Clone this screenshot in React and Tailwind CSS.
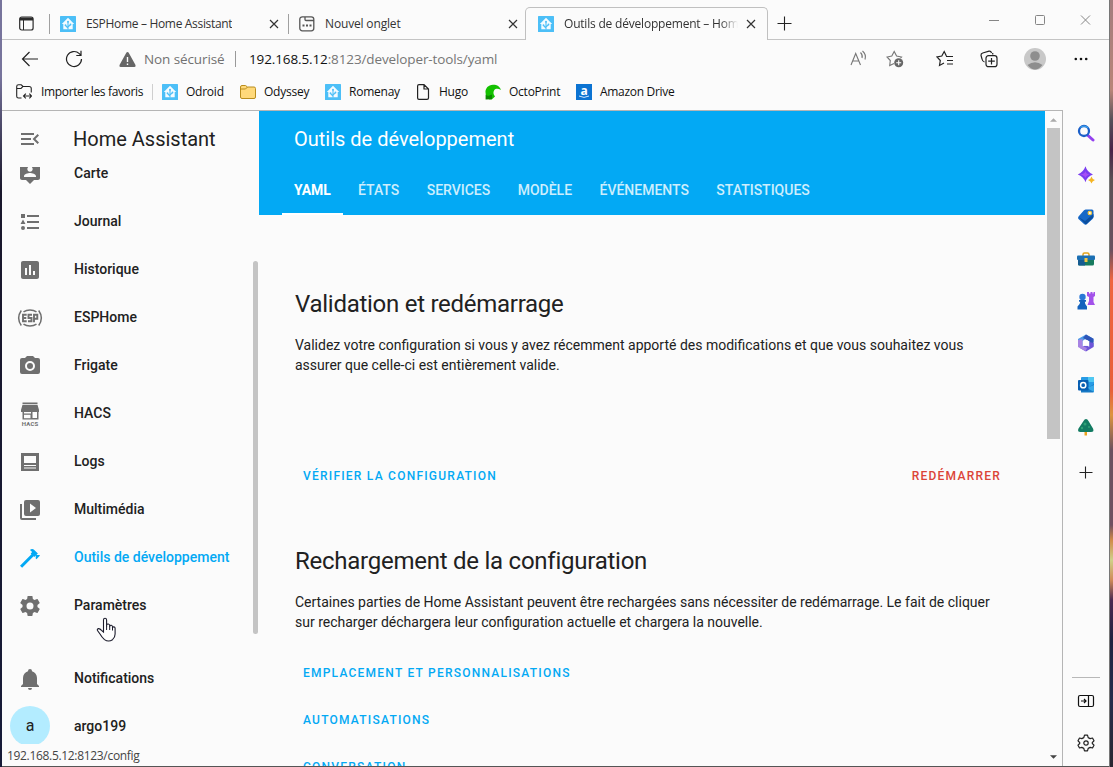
import React from "react";

const MENU = "M21,15.61L19.59,17L14.58,12L19.59,7L21,8.39L17.44,12L21,15.61M3,6H16V8H3V6M3,13V11H13V13H3M3,18V16H16V18H3Z";
const MAP = "M20 2H4C2.9 2 2 2.9 2 4V16C2 17.11 2.9 18 4 18H8L12 22L16 18H20C21.11 18 22 17.11 22 16V4C22 2.9 21.11 2 20 2M12 4.3C13.5 4.3 14.7 5.5 14.7 7S13.5 9.7 12 9.7 9.3 8.5 9.3 7 10.5 4.3 12 4.3M18 15H6V14.1C6 12.1 10 11 12 11S18 12.1 18 14.1V15Z";
const LIST = "M5,9.5L7.5,14H2.5L5,9.5M3,4H7V8H3V4M5,20A2,2 0 0,0 7,18A2,2 0 0,0 5,16A2,2 0 0,0 3,18A2,2 0 0,0 5,20M9,5V7H21V5H9M9,19H21V17H9V19M9,13H21V11H9V13Z";
const CHART = "M9 17H7V10H9M13 17H11V7H13M17 17H15V13H17M19 3H5C3.89 3 3 3.89 3 5V19C3 20.1 3.9 21 5 21H19C20.1 21 21 20.1 21 19V5C21 3.89 20.1 3 19 3Z";
const CAMERA = "M4,4H7L9,2H15L17,4H20A2,2 0 0,1 22,6V18A2,2 0 0,1 20,20H4A2,2 0 0,1 2,18V6A2,2 0 0,1 4,4M12,7A5,5 0 0,0 7,12A5,5 0 0,0 12,17A5,5 0 0,0 17,12A5,5 0 0,0 12,7M12,9A3,3 0 0,1 15,12A3,3 0 0,1 12,15A3,3 0 0,1 9,12A3,3 0 0,1 12,9Z";
const LOGS = "M3 3H21V21H3V3M6 6V13H18V6H6M6 15V16H18V15H6M6 17.500V18.500H18V17.500H6Z";
const MEDIA = "M4,6H2V20A2,2 0 0,0 4,22H18V20H4V6M20,2H8A2,2 0 0,0 6,4V16A2,2 0 0,0 8,18H20A2,2 0 0,0 22,16V4A2,2 0 0,0 20,2M12,14.5V5.5L18,10L12,14.5Z";
const HAMMER = "M2 19.63L13.43 8.2L12.72 7.5L14.14 6.07L12 3.89C13.2 2.7 15.09 2.7 16.27 3.89L19.87 7.5L18.45 8.91H21.29L22 9.62L18.45 13.21L17.74 12.5V9.62L16.27 11.04L15.56 10.33L4.13 21.76L2 19.63Z";
const COG = "M12,15.5A3.5,3.5 0 0,1 8.5,12A3.5,3.5 0 0,1 12,8.5A3.5,3.5 0 0,1 15.5,12A3.5,3.5 0 0,1 12,15.5M19.43,12.97C19.47,12.65 19.5,12.33 19.5,12C19.5,11.67 19.47,11.34 19.43,11L21.54,9.37C21.73,9.22 21.78,8.95 21.66,8.73L19.66,5.27C19.54,5.05 19.27,4.96 19.05,5.05L16.56,6.05C16.04,5.66 15.5,5.32 14.87,5.07L14.5,2.42C14.46,2.18 14.25,2 14,2H10C9.75,2 9.54,2.18 9.5,2.42L9.13,5.07C8.5,5.32 7.96,5.66 7.44,6.05L4.95,5.05C4.73,4.96 4.46,5.05 4.34,5.27L2.34,8.73C2.21,8.95 2.27,9.22 2.46,9.37L4.57,11C4.53,11.34 4.5,11.67 4.5,12C4.5,12.33 4.53,12.65 4.57,12.97L2.46,14.63C2.27,14.78 2.21,15.05 2.34,15.27L4.34,18.73C4.46,18.95 4.73,19.03 4.95,18.95L7.44,17.94C7.96,18.34 8.5,18.68 9.13,18.93L9.5,21.58C9.54,21.82 9.75,22 10,22H14C14.25,22 14.46,21.82 14.5,21.58L14.87,18.93C15.5,18.67 16.04,18.34 16.56,17.94L19.05,18.95C19.27,19.03 19.54,18.95 19.66,18.73L21.66,15.27C21.78,15.05 21.73,14.78 21.54,14.63L19.43,12.97Z";
const BELL = "M21,19V20H3V19L5,17V11C5,7.9 7.03,5.17 10,4.29C10,4.19 10,4.1 10,4A2,2 0 0,1 12,2A2,2 0 0,1 14,4C14,4.1 14,4.19 14,4.29C16.97,5.17 19,7.9 19,11V17L21,19M14,21A2,2 0 0,1 12,23A2,2 0 0,1 10,21";

const Mdi = ({ d }) => (
  <svg className="size-6 shrink-0 fill-current" viewBox="0 0 24 24"><path fillRule="evenodd" d={d} /></svg>
);

const EspIcon = () => (
  <svg className="size-6 shrink-0 overflow-visible" viewBox="0 0 24 24" fill="none" stroke="currentColor">
    <path strokeWidth="1.500" d="M5.500 5.800A10 8 0 0 1 18.500 5.800M5.500 18.200A10 8 0 0 0 18.500 18.200M3.300 4.500Q-2 12 3.300 19.500M20.700 4.500Q26 12 20.700 19.500" />
    <path strokeWidth="1.900" d="M8.700 8.800H5V15.200H8.700M5 12H8.300M14 8.800H10.500V12H13.500V15.200H10M16 16.200V8.800H19.300V12.700H16" />
  </svg>
);

const HacsIcon = () => (
  <svg className="size-6 shrink-0 overflow-visible fill-current" viewBox="0 0 24 24">
    <path d="M4.500 .5H19.500V2H4.500zM4.500 2.700H19.500L21 8V10H3V8z" />
    <path fillRule="evenodd" d="M4.500 10H6V11.500H13V10H14.500V16H19V10H20.500V17.500H4.500zM6 12.700V16.200H12.500V12.700z" />
    <text x="12" y="23.700" textAnchor="middle" textLength="16.500" className="font-['Roboto',sans-serif] text-[6px] font-bold">HACS</text>
  </svg>
);

const HaIcon = () => (
  <svg className="size-4 shrink-0" viewBox="0 0 16 16">
    <rect width="16" height="16" rx="0.500" fill="#4cbff7" />
    <path d="M8 1.800L14.200 8H12.700V13.300H3.300V8H1.800z" fill="#f4fbff" />
    <path d="M8 13.500V6M8 12L5.500 9.500M8 11L10.500 8.700" stroke="#4cbff7" strokeWidth="1.100" />
    <circle cx="8" cy="5.700" r="1" fill="#4cbff7" /><circle cx="5.500" cy="9.200" r=".9" fill="#4cbff7" /><circle cx="10.500" cy="8.500" r=".9" fill="#4cbff7" />
  </svg>
);

const Close = () => (
  <svg className="size-[10px] shrink-0" viewBox="0 0 10 10"><path d="M1 1L9 9M9 1L1 9" stroke="#333" strokeWidth="1.200" /></svg>
);

const FolderIcon = () => (
  <svg className="size-4 shrink-0" viewBox="0 0 16 16"><path d="M.5 3Q.5 1.500 2 1.500H5.500L7.500 3H14Q15.500 3 15.500 4.500V13Q15.500 14.500 14 14.500H2Q.5 14.500 .5 13z" fill="#ffd97a" stroke="#b98d1d" /><path d="M.5 5H5.500L7.500 3" stroke="#b98d1d" fill="none" /></svg>
);
const PageIcon = () => (
  <svg className="size-4 shrink-0" viewBox="0 0 16 16" fill="none" stroke="#222" strokeWidth="1.200"><path d="M4 .6H9L13.500 5V14Q13.500 15.400 12 15.400H4Q2.600 15.400 2.600 14V2Q2.600 .6 4 .6zM9 .6V5H13.500" /></svg>
);
const OctoIcon = () => (
  <svg className="size-4 shrink-0" viewBox="0 0 16 16"><path d="M4.500 15.500C-2 11 -.5 1 8 .7C12 .6 15 2.500 15.900 6C13.500 4.200 10.500 4.200 9.300 6C7.800 8.500 8.500 10.500 10 12.500L7 15.200z" fill="#13c100" /><path d="M.6 15.500V10.500L3 12L7 10.500V15.200z" fill="#0a8a00" /></svg>
);
const AmazonIcon = () => (
  <svg className="size-4 shrink-0 overflow-visible" viewBox="0 0 16 16"><rect width="16" height="16" fill="#0b73d2" /><text x="8" y="10.800" textAnchor="middle" fill="#fff" className="font-['Open_Sans',sans-serif] text-[12px] font-bold">a</text><path d="M3 12Q8 14.800 13 12" stroke="#cfe6ff" fill="none" /></svg>
);

const Tab = ({ icon, title, className, textClass }) => (
  <div className={"flex items-center " + className}>
    {icon}
    <span className={"min-w-0 overflow-hidden text-[12px] whitespace-nowrap text-[#333] " + textClass}>{title}</span>
    <span className="ml-auto flex"><Close /></span>
  </div>
);

const TabStrip = () => (
  <div className="flex h-10 shrink-0">
    <div className="flex h-10 w-[525px] shrink-0 items-center border-b border-[#c4c4c4] pt-2">
      <svg className="ml-[17px] size-[15px]" viewBox="0 0 15 15" fill="none" stroke="#2b2b2b"><rect x=".7" y="1" width="13.400" height="13" rx="2" strokeWidth="1.200" /><path d="M1 3H14" strokeWidth="3" /><path d="M4.500 4V14" /></svg>
      <div className="ml-[15px] h-5 w-px bg-[#a0a0a0]" />
      <Tab className="ml-[10px] w-[219px]" icon={<HaIcon />} title="ESPHome – Home Assistant" textClass="ml-[10px] tracking-[-0.32px]" />
      <div className="ml-[9px] h-5 w-px bg-[#a0a0a0]" />
      <Tab className="ml-[10px] w-[219px]" title="Nouvel onglet" textClass="ml-[10px] tracking-[-0.16px]" icon={
        <svg className="size-4 shrink-0" viewBox="0 0 16 16" fill="none" stroke="#555" strokeWidth="1.300"><rect x=".8" y=".8" width="14" height="14" rx="2.500" /><path d="M6 1V3.500Q6 4.500 7 4.500H15" /><path d="M3.500 9.500H5.500M7 9.500H9M10.500 9.500H12.500" strokeWidth="2" /></svg>
      } />
    </div>
    <div className="-ml-[2px] mt-[7px] flex h-[33px] w-[243px] shrink-0 items-center rounded-t-[5px] border border-b-0 border-[#c0c0c0] bg-[#fbfbfb] pl-3">
      <div className="flex items-center">
        <HaIcon />
        <span className="ml-[10px] w-[174px] overflow-hidden mask-r-from-90% text-[12px] tracking-[-0.2px] whitespace-nowrap text-[#333]">Outils de développement – Home Assistant</span>
        <span className="ml-[8px] flex"><Close /></span>
      </div>
    </div>
    <div className="flex h-10 min-w-0 flex-1 items-center border-b border-[#c4c4c4] pt-[7px]">
      <svg className="ml-[9px] size-[15px]" viewBox="0 0 15 15" stroke="#222" strokeWidth="1.100"><path d="M.5 7.500H14.500M7.500 .5V14.500" /></svg>
      <svg className="mb-2 ml-auto h-3 w-[102px]" viewBox="0 0 102 12" fill="none" stroke="#858585"><path d="M0 7.500H10M92 2.500L101 11.500M101 2.500L92 11.500" /><rect x="46.500" y="2.500" width="9" height="9" rx="1" /></svg>
      <div className="w-[18px]" />
    </div>
  </div>
);

const AddressBar = () => (
  <div className="flex h-[38px] shrink-0 items-center text-[13.500px]">
    <svg className="ml-[19px] size-[18px]" viewBox="0 0 18 18" fill="none" stroke="#222" strokeWidth="1.200"><path d="M17 9H1.500M8.500 2L1.500 9L8.500 16" /></svg>
    <svg className="ml-[26px] size-[18px]" viewBox="0 0 18 18" fill="none" stroke="#222" strokeWidth="1.200"><path d="M16.500 9A7.500 7.500 0 1 1 14.300 3.700L16 5.400M16 .8V5.500H11.300" /></svg>
    <svg className="ml-[36px] h-[15px] w-[17px]" viewBox="0 0 17 15"><path d="M8.500 0Q9.300 0 9.700 .8L16.500 13Q17 15 15.500 15H1.500Q0 15 .5 13L7.300 .8Q7.700 0 8.500 0z" fill="#666" /><path d="M8.500 5V10M8.500 11.500V13" stroke="#fff" strokeWidth="1.400" /></svg>
    <span className="ml-[8px] w-[80px] tracking-[-0.1px] whitespace-nowrap text-[#717171]">Non sécurisé</span>
    <div className="ml-[11px] h-4 w-px bg-[#999]" />
    <span className="ml-[13px] tracking-[-0.12px] whitespace-nowrap text-[#767676]"><span className="text-[#111]">192.168.5.12</span>:8123/developer-tools/yaml</span>
    <svg className="ml-auto size-[18px]" viewBox="0 0 18 18" fill="none" stroke="#767676" strokeWidth="1.100"><path d="M1 15L5.700 3.500L10.500 15M2.600 11H9" /><path d="M10.500 2.500Q13 5 12 8M12.500 1Q16.500 4.500 15 9.500" /></svg>
    <svg className="ml-[18px] size-[18px]" viewBox="0 0 18 18" fill="none" stroke="#767676" strokeWidth="1.100"><path d="M8 13.500L3.700 15.500L4.300 10.500L1 7L5.800 6L8.200 1.500L10.600 6L15.500 7L14.500 8" /><circle cx="12.700" cy="12.700" r="4.500" fill="#666" stroke="none" /><path d="M12.700 10.200V15.200M10.200 12.700H15.200" stroke="#fff" /></svg>
    <svg className="ml-[32px] size-[18px]" viewBox="0 0 18 18" fill="none" stroke="#222" strokeWidth="1.200"><path d="M8 13L3.500 15.500L4.300 10.500L1 7L5.800 6L8.200 1.500L10.400 6M10 6.500H17M11 10.500H17M11 14H17" /></svg>
    <svg className="ml-[26px] size-[18px]" viewBox="0 0 18 18" fill="none" stroke="#222" strokeWidth="1.200"><path d="M4.500 12Q2.500 11.500 2 9L1 5.500Q.8 3.500 2.700 3L9 1.200Q11 1 11.500 3M13 4.500L12.500 3" /><rect x="6" y="5.700" width="11" height="11" rx="2.500" /><path d="M11.500 8V14.500M8.200 11.200H14.800" /></svg>
    <svg className="ml-[26px] size-[22px]" viewBox="0 0 22 22"><circle cx="11" cy="11" r="11" fill="#c8c8c8" /><circle cx="11" cy="8" r="4.800" fill="#8e8e8e" /><path d="M3.500 17Q11 11.500 18.500 17Q11 26 3.500 17z" fill="#8e8e8e" /></svg>
    <svg className="mr-[21px] ml-[28px] h-1 w-[14px]" viewBox="0 0 14 4" fill="#111"><circle cx="1.800" cy="2" r="1.300" /><circle cx="7" cy="2" r="1.300" /><circle cx="12.200" cy="2" r="1.300" /></svg>
  </div>
);

const Fav = ({ icon, label, className, textClass = "ml-2 tracking-[-0.24px]" }) => (
  <div className={"flex shrink-0 items-center text-[12px] whitespace-nowrap text-[#111] " + className}>
    {icon}<span className={textClass}>{label}</span>
  </div>
);

const FavoritesBar = () => (
  <div className="flex h-8 shrink-0 items-center pb-[5px]">
    <Fav className="ml-[14px] w-[127px]" label="Importer les favoris" textClass="ml-[9px] tracking-[-0.36px]" icon={
      <svg className="size-[17px]" viewBox="0 0 16 16" fill="none" stroke="#222" strokeWidth="1.100"><path d="M5.500 14.500H2.500Q.7 14.500 .7 12.700V3Q.7 1.300 2.500 1.300H5.200L7 3H13Q15.200 3 15.200 5V9M.7 5H5L7 3M8 12.500H15.500M9.800 10.200L7.500 12.500L9.800 14.800M13.300 10.200L15.500 12.500L13.300 14.800" /></svg>
    } />
    <div className="ml-[9px] h-4 w-px bg-[#cfcfcf]" />
    <Fav className="ml-[9px] w-[78px]" icon={<HaIcon />} label="Odroid" />
    <Fav className="w-[85px]" icon={<FolderIcon />} label="Odyssey" />
    <Fav className="w-[90px]" icon={<HaIcon />} label="Romenay" />
    <Fav className="w-[70px]" icon={<PageIcon />} label="Hugo" />
    <Fav className="w-[91px]" icon={<OctoIcon />} label="OctoPrint" />
    <Fav icon={<AmazonIcon />} label="Amazon Drive" textClass="ml-2 tracking-[-0.3px]" />
  </div>
);

const NavItem = ({ icon, label, active }) => (
  <div className={"flex h-12 shrink-0 items-center pl-4 text-[14px] font-medium " + (active ? "text-[#03a9f4]" : "text-[#212121]")}>
    <span className={"flex pt-0.5 " + (active ? "" : "text-[#6f6f6f]")}>{icon}</span>
    <span className="ml-8 leading-[12px] whitespace-nowrap">{label}</span>
  </div>
);

const Sidebar = () => (
  <aside className="relative flex w-[257px] shrink-0 flex-col">
    <div className="flex h-14 shrink-0 items-center pl-4 text-[20px] text-[#212121]">
      <span className="flex text-[#6f6f6f]"><Mdi d={MENU} /></span>
      <span className="ml-[31px] whitespace-nowrap">Home Assistant</span>
    </div>
    <div className="flex h-[467px] shrink-0 overflow-hidden">
      <div className="-mt-[18px] flex flex-1 flex-col">
        <NavItem icon={<Mdi d={MAP} />} label="Carte" />
        <NavItem icon={<Mdi d={LIST} />} label="Journal" />
        <NavItem icon={<Mdi d={CHART} />} label="Historique" />
        <NavItem icon={<EspIcon />} label="ESPHome" />
        <NavItem icon={<Mdi d={CAMERA} />} label="Frigate" />
        <NavItem icon={<HacsIcon />} label="HACS" />
        <NavItem icon={<Mdi d={LOGS} />} label="Logs" />
        <NavItem icon={<Mdi d={MEDIA} />} label="Multimédia" />
        <NavItem icon={<Mdi d={HAMMER} />} label="Outils de développement" active />
        <NavItem icon={<Mdi d={COG} />} label="Paramètres" />
      </div>
      <div className="mt-[94px] mr-[1px] h-[373px] w-[5px] rounded-full bg-[#c4c4c4]" />
    </div>
    <div className="mt-5">
      <NavItem icon={<Mdi d={BELL} />} label="Notifications" />
      <div className="flex h-12 items-center pl-2 text-[14px] font-medium text-[#212121]">
        <span className="flex size-10 items-center justify-center rounded-full bg-[#b3ecff] text-[16px] font-normal">a</span>
        <span className="ml-6">argo199</span>
      </div>
    </div>
    <div className="absolute bottom-0 left-0 h-[22px] w-[150px] bg-[#fbfbfb] pl-[5px] font-['Open_Sans','Noto_Sans',sans-serif] text-[12px] leading-[24px] tracking-[-0.32px] text-[#444]">192.168.5.12:8123/config</div>
    <svg className="absolute top-[506px] left-[93px] h-[26px] w-[22px]" viewBox="0 0 22 26"><path d="M8.500 15V3Q8.500 1.300 10 1.300T11.600 3V9.500V8Q12 6.800 13.300 7T14.700 8.500V10V9Q15.200 8 16.300 8.300T17.500 9.700V11Q17.800 9.600 19 9.900T20.100 11.500V17Q20.100 20.500 17.500 22.700Q13.500 25.400 9.500 22.600Q7 20.500 5 17L2.500 13.500Q2 12 3.300 11.600Q5 11.400 6.500 13.300z" fill="#fff" stroke="#1b1b2b" strokeWidth="1.100" /><path d="M11.600 9V13M14.700 9.500V13M17.500 10.500V13.500" stroke="#1b1b2b" /></svg>
  </aside>
);

const TABS = ["ÉTATS", "SERVICES", "MODÈLE", "ÉVÉNEMENTS", "STATISTIQUES"];

const Main = () => (
  <main className="flex w-[786px] shrink-0 flex-col overflow-hidden text-[#212121]">
    <header className="flex h-[104px] shrink-0 flex-col bg-[#03a9f4] text-white">
      <div className="flex h-14 items-center pl-[35px] text-[20px]">Outils de développement</div>
      <div className="flex h-12 gap-[3.400px] pl-[23px] text-[14px] font-medium">
        <div className="flex items-center border-b-2 border-white px-3 font-bold tracking-[-0.1px]">YAML</div>
        {TABS.map((t) => <div key={t} className="flex items-center border-b-2 border-transparent px-3 text-[#cdeefd]">{t}</div>)}
      </div>
    </header>
    <section className="mt-[73px] px-9">
      <h1 className="text-[24px] leading-8 tracking-[-0.27px]">Validation et redémarrage</h1>
      <p className="mt-[15px] h-10 text-[14px] leading-5">Validez votre configuration si vous y avez récemment apporté des modifications et que vous souhaitez vous<br />assurer que celle-ci est entièrement valide.</p>
      <div className="mt-[92px] flex h-[18px] items-center justify-between pr-[8px] pl-2 text-[12px] font-medium tracking-[1.230px]">
        <span className="text-[#03a9f4]">VÉRIFIER LA CONFIGURATION</span>
        <span className="text-[#db4437]">REDÉMARRER</span>
      </div>
    </section>
    <section className="mt-[60px] px-9">
      <h1 className="text-[24px] leading-8 tracking-[-0.25px]">Rechargement de la configuration</h1>
      <p className="mt-[15px] h-10 text-[14px] leading-5 whitespace-nowrap">Certaines parties de Home Assistant peuvent être rechargées sans nécessiter de redémarrage. Le fait de cliquer<br />sur recharger déchargera leur configuration actuelle et chargera la nouvelle.</p>
      <div className="mt-[17px] flex flex-col pl-2 text-[12px] font-medium tracking-[1.230px] text-[#03a9f4]">
        <span className="flex h-[47px] items-center">EMPLACEMENT ET PERSONNALISATIONS</span>
        <span className="flex h-[47px] items-center">AUTOMATISATIONS</span>
        <span className="flex h-[47px] items-center">CONVERSATION</span>
      </div>
    </section>
  </main>
);

const Scrollbar = () => (
  <div className="flex w-[18px] shrink-0 flex-col items-center justify-between border-r border-[#b5b5b5]">
    <div className="flex flex-col items-center">
      <svg className="mt-[7px] h-1 w-[7px]" viewBox="0 0 8 4"><path d="M0 4L4 0L8 4z" fill="#aaa" /></svg>
      <div className="mt-[6px] h-[311px] w-[13px] bg-[#c4c4c4]" />
    </div>
    <svg className="mb-[7px] h-1 w-[7px]" viewBox="0 0 8 4"><path d="M0 0L4 4L8 0z" fill="#444" /></svg>
  </div>
);

const Icon = ({ children }) => (
  <div className="flex h-[42px] w-full shrink-0 items-center justify-center"><svg className="size-[18px]" viewBox="0 0 18 18" fill="none">{children}</svg></div>
);

const EdgeRail = () => (
  <nav className="flex w-[46px] shrink-0 flex-col items-center">
    <div className="h-[2px] shrink-0" />
    <Icon><path d="M11 11.500L16 16" stroke="#9340ef" strokeWidth="3" strokeLinecap="round" /><circle cx="7" cy="7" r="5" stroke="#1a5fc9" strokeWidth="2.300" /><path d="M3.500 3.500A5 5 0 0 1 11 4" stroke="#3aa0ea" strokeWidth="1.300" /></Icon>
    <Icon><path d="M8.500 .3Q10 6 16 8.500Q10 10.500 8.500 16.300Q6.500 10.500 .8 8.500Q6.500 6 8.500 .3z" fill="#7a3df0" /><path d="M8.500 5Q9 8 12.500 8.500Q9 9.500 8.500 12Q8 9.500 3 8.500Q8 8 8.500 5z" fill="#a54ff5" /><path d="M14.500 10.500Q15 13 18 14Q15 15 14.500 17.500Q14 15 11 14Q14 13 14.500 10.500z" fill="#f5b523" /></Icon>
    <Icon><path d="M8.500 1.500H15Q16.500 1.500 16.500 3V9Q16.500 10 15.500 11L10 16Q8.500 17.500 7 16L1.500 11Q.5 10 1.500 8.500L7 2.300z" fill="#1769c8" /><path d="M1.500 9L9 16.500L16.500 9V6L8 13z" fill="#0b4f9e" /><circle cx="12.800" cy="5" r="1.700" fill="#fff" stroke="#f2c43a" strokeWidth="1.200" /></Icon>
    <Icon><path d="M6 6V4.500Q6 3 7.500 3H10.500Q12 3 12 4.500V6" stroke="#e0a21d" strokeWidth="1.500" /><rect x="0" y="5.500" width="18" height="4.500" rx="1" fill="#1b6fb3" /><path d="M1 10H17V14Q17 15.500 15.500 15.500H2.500Q1 15.500 1 14z" fill="#177b5e" /><path d="M1 10H8V15.500H2.500Q1 15.500 1 14z" fill="#155b91" /><rect x="7.500" y="8" width="3" height="4" fill="#f3c544" /></Icon>
    <Icon><path d="M10 0H12V1.500H13.500V0H15.500V1.500H16.500V0H18V4L16.500 5V10L18 13H10.500L12 9V5L10 4z" fill="#a352ea" /><circle cx="5.500" cy="5" r="3.200" fill="#2a78d6" /><path d="M2 8H9V9.700H7.800Q7.800 12.500 10 14.500V17.500H.5V14.500Q3.200 12.500 3.200 9.700H2z" fill="#1462bd" /></Icon>
    <Icon><path d="M9 .5L16.500 4.700V8L9 4.500L5.500 7V12L1 10.500V5z" fill="#4b9be8" /><path d="M9 .5L16.500 4.700V12.500L12.500 14V7.500L6 4z" fill="#2e55b8" /><path d="M16.500 9V13L9 17.500L3 14L9 11L12.500 13V8z" fill="#6e55d9" /><path d="M5.500 5V12L10 14L8.500 17.200L1 13V6z" fill="#a783e3" /><circle cx="9" cy="9" r="3" fill="#fff" /></Icon>
    <Icon><rect x="4" y="1" width="13" height="10" rx="1" fill="#279be5" /><path d="M11 1H17V6H11z" fill="#50c8f2" /><path d="M4 9L11 12L17 8V15.500Q17 16.500 16 16.500H4z" fill="#167ac6" /><path d="M10 12L17 16V9z" fill="#36a9e8" /><rect x="1" y="4" width="10.500" height="10.500" rx="1" fill="#075eb2" /><circle cx="6.200" cy="9.200" r="2.600" stroke="#fff" strokeWidth="1.500" /></Icon>
    <Icon><path d="M7.500 13H10V17.500H7.500z" fill="#eaa31d" /><path d="M9 1Q10.500 1 11.500 3L16 10.500Q17.500 14 14 14H3.500Q0 14 1.500 10.500L6.500 3Q7.500 1 9 1z" fill="#127b62" /><circle cx="8" cy="6" r="1.500" fill="#2fa277" /><circle cx="12" cy="9" r="1" fill="#2fa277" /><circle cx="5" cy="10" r="1.200" fill="#2fa277" /></Icon>
    <div className="mt-[3px] w-full"><Icon><path d="M2.500 9.500H15.500M8.500 3.500V15.500" stroke="#222" strokeWidth="1.100" /></Icon></div>
    <div className="mt-auto h-px w-7 bg-[#b8b8b8]" />
    <div className="mt-[2px] mb-[2px] w-full">
      <Icon><rect x="1.500" y="3.500" width="15" height="11" rx="1.500" stroke="#111" strokeWidth="1.200" /><path d="M11.500 3.500V14.500M4 9H9M7 7L9 9L7 11" stroke="#111" strokeWidth="1.200" /></Icon>
      <Icon><path d="M7.500 1.200H10.500L11.200 3.600L13.200 4.600L15.500 4L17 6.800L15.300 8.500V9.500L17 11.200L15.500 14L13.200 13.400L11.200 14.400L10.500 16.800H7.500L6.800 14.400L4.800 13.400L2.500 14L1 11.200L2.700 9.500V8.500L1 6.800L2.500 4L4.800 4.600L6.800 3.600z" stroke="#222" strokeWidth="1.200" strokeLinejoin="round" /><circle cx="9" cy="9" r="2.200" stroke="#222" strokeWidth="1.200" /></Icon>
    </div>
  </nav>
);

export default function App() {
  return (
    <div className="flex h-[767px] w-[1113px] overflow-hidden bg-[#1c1a2c] font-['Roboto',sans-serif]">
      <div className="w-[2px] shrink-0 bg-linear-to-b from-[#77749c] from-10% via-[#19172b] via-25% to-[#171b38]" />
      <div className="flex w-[1107px] shrink-0 flex-col border-b border-[#555] bg-[#fbfbfb]">
        <div className="flex h-[110px] shrink-0 flex-col font-['Open_Sans','Noto_Sans',sans-serif]">
          <TabStrip />
          <AddressBar />
          <FavoritesBar />
        </div>
        <div className="flex min-h-0 flex-1">
          <div className="flex w-[1061px] shrink-0 border-t border-[#b5b5b5]">
            <Sidebar />
            <Main />
            <Scrollbar />
          </div>
          <EdgeRail />
        </div>
      </div>
      <div className="w-1 shrink-0 border-l border-[#777] bg-[linear-gradient(to_bottom,#a47c7d_0,#b98578_90px,#55505a_120px,#4a2248_150px,#5b5055_180px,#6b5060_250px,#ef6540_280px,#e85f3a_390px,#dd9440_415px,#6b5060_450px,#705060_525px,#d08a48_540px,#cfd08a_560px,#d08a58_580px,#4a2a50_600px,#1f2340_640px,#262c4c_700px,#2a2630_767px)]" />
    </div>
  );
}
